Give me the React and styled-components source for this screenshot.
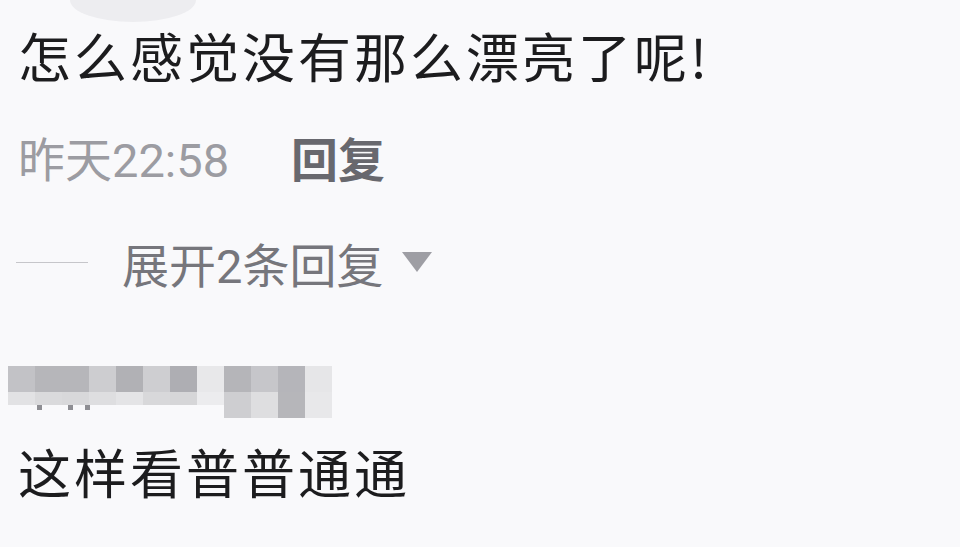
import React from 'react';
import styled, { createGlobalStyle } from 'styled-components';

const GlobalStyle = createGlobalStyle`
    html, body {
        margin: 0;
        padding: 0;
        background: #f9f9fb;
    }
    body {
        font-family: "Roboto", "Noto Sans CJK SC", sans-serif;
        overflow: hidden;
    }
`;

const Page = styled.div`
    width: 960px;
    height: 547px;
    overflow: hidden;
    background: #f9f9fb;
    display: flex;
    flex-direction: column;
`;

const AvatarEdge = styled.div`
    width: 126px;
    height: 22px;
    margin-left: 70px;
    background: #ededf0;
    border-radius: 0 0 63px 63px / 0 0 22px 22px;
`;

const CommentText = styled.p`
    margin: ${p => p.$top}px 0 0 18px;
    font-size: 53px;
    line-height: 64px;
    letter-spacing: 3px;
    color: #1c1c1e;
    font-family: "Noto Sans CJK SC", sans-serif;
`;

const MetaRow = styled.div`
    display: flex;
    align-items: center;
    margin: 39px 0 0 18px;
    height: 60px;
    font-size: 47px;
`;

const Time = styled.span`
    color: #9c9ca2;
`;

const ReplyLink = styled.span`
    margin-left: 62px;
    color: #68686e;
    font-weight: 700;
    font-family: "Noto Sans CJK SC", sans-serif;
`;

const ExpandRow = styled.div`
    display: flex;
    align-items: center;
    margin: 46px 0 0 16px;
    height: 60px;
`;

const Rule = styled.div`
    width: 72px;
    height: 1px;
    background: #c6c6ca;
`;

const ExpandText = styled.span`
    margin-left: 34px;
    font-size: 47px;
    color: #76767c;
`;

const Caret = styled.span`
    margin-left: 19px;
    width: 0;
    height: 0;
    border-left: 15px solid transparent;
    border-right: 15px solid transparent;
    border-top: 20px solid #9e9ea4;
`;

const Mosaic = styled.div`
    position: relative;
    display: flex;
    margin: 74px 0 0 8px;
    height: 52px;
    filter: blur(0.6px);
`;

const MosaicCol = styled.div`
    width: 27px;
    display: flex;
    flex-direction: column;
`;

const Cell = styled.div`
    height: ${p => p.$h}px;
    background: ${p => p.$c};
`;

const Dot = styled.span`
    position: absolute;
    top: 39px;
    left: ${p => p.$x}px;
    width: 5px;
    height: 5px;
    background: #8e8e93;
`;

const top = ['#c2c2c6', '#b6b6ba', '#b6b6ba', '#cdcdd0', '#b1b1b5', '#cecED1', '#aeaeb3', '#e8e8ea', '#b5b5b9', '#c6c6ca', '#b5b5ba', '#e6e6e8'];
const bottom = ['#e2e2e4', '#dadadc', '#d8d8da', '#dedee0', '#e4e4e6', '#d8d8da', '#d6d6d8', '#ececee', '#cecED1', '#dedee0', '#b6b6ba', '#e8e8ea'];

export default function App() {
    return (
        <Page>
            <GlobalStyle />
            <AvatarEdge />
            <CommentText $top={1}>怎么感觉没有那么漂亮了呢!</CommentText>
            <MetaRow>
                <Time>昨天22:58</Time>
                <ReplyLink>回复</ReplyLink>
            </MetaRow>
            <ExpandRow>
                <Rule />
                <ExpandText>展开2条回复</ExpandText>
                <Caret />
            </ExpandRow>
            <Mosaic>
                {top.map((c, i) => (
                    <MosaicCol key={i}>
                        <Cell $h={26} $c={c} />
                        <Cell $h={i >= 8 ? 26 : 13} $c={bottom[i]} />
                    </MosaicCol>
                ))}
                <Dot $x={29} />
                <Dot $x={60} />
                <Dot $x={77} />
            </Mosaic>
            <CommentText $top={21}>这样看普普通通</CommentText>
        </Page>
    );
}
